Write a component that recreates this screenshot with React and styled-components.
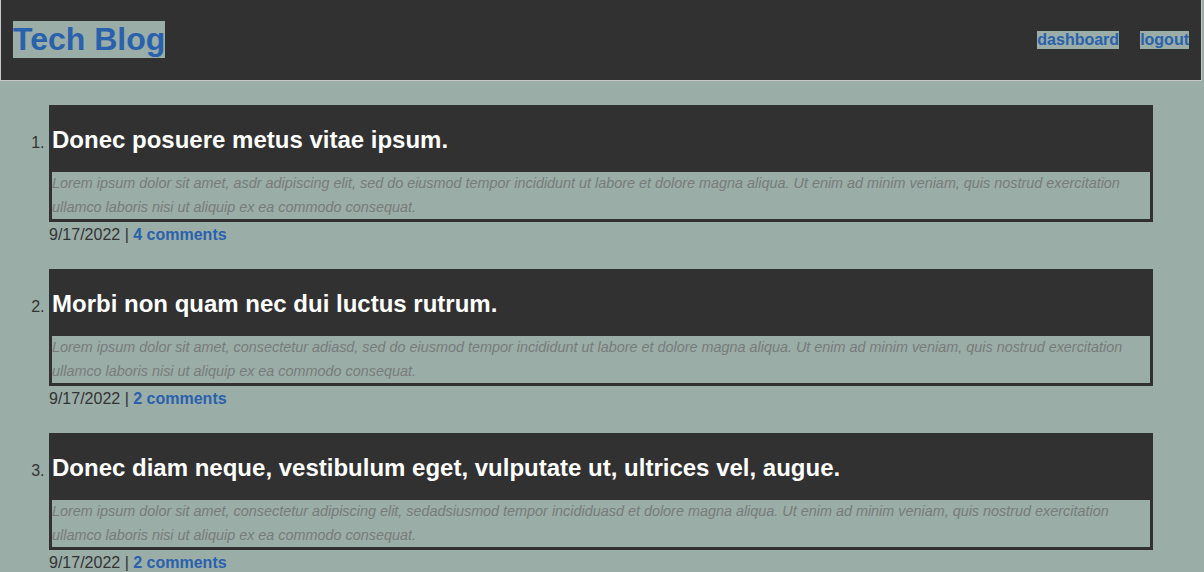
import React from "react";
import styled, { createGlobalStyle } from "styled-components";

const Global = createGlobalStyle`
  html, body {
    margin: 0;
    padding: 0;
    background: #9aada7;
    font-family: "Liberation Sans", Arial, sans-serif;
    color: #333;
  }
`;

const Header = styled.header`
  display: flex;
  align-items: center;
  justify-content: space-between;
  height: 80px;
  margin-right: 2px;
  padding: 0 12px;
  background: #313131;
  border: 1px solid #c3c8c6;
  border-top: none;
`;

const Logo = styled.h1`
  margin: -1px 0 0;
  font-size: 32px;
  font-weight: bold;
  line-height: 37px;
  color: #2961ad;
  background: #9aada7;
`;

const Nav = styled.nav`
  display: flex;
  gap: 21px;
  margin-top: -1px;
`;

const NavLink = styled.a`
  font-size: 16px;
  font-weight: bold;
  line-height: 18px;
  color: #2961ad;
  background: #9aada7;
  text-decoration: none;
`;

const List = styled.ol`
  margin: 24px 51px 0 49px;
  padding: 0;
`;

const Item = styled.li`
  font-size: 16px;
  color: #333;
  margin-bottom: 25px;
`;

const Card = styled.div`
  border: 3px solid #313131;
  border-top: none;
`;

const Title = styled.h2`
  margin: 0;
  padding: 21px 0 18px;
  background: #313131;
  color: #fff;
  font-size: 24px;
  line-height: 28px;
  font-weight: bold;
`;

const Body = styled.p`
  margin: 0;
  font-size: 14.4px;
  line-height: 23.5px;
  font-style: italic;
  color: #797b7a;
`;

const Meta = styled.div`
  padding-top: 3px;
  font-size: 16px;
  line-height: 19px;
  color: #333;
`;

const Comments = styled.a`
  font-weight: bold;
  color: #2961ad;
  text-decoration: none;
`;

const posts = [
  {
    title: "Donec posuere metus vitae ipsum.",
    body:
      "Lorem ipsum dolor sit amet, asdr adipiscing elit, sed do eiusmod tempor incididunt ut labore et dolore magna aliqua. Ut enim ad minim veniam, quis nostrud exercitation ullamco laboris nisi ut aliquip ex ea commodo consequat.",
    date: "9/17/2022",
    comments: "4 comments",
  },
  {
    title: "Morbi non quam nec dui luctus rutrum.",
    body:
      "Lorem ipsum dolor sit amet, consectetur adiasd, sed do eiusmod tempor incididunt ut labore et dolore magna aliqua. Ut enim ad minim veniam, quis nostrud exercitation ullamco laboris nisi ut aliquip ex ea commodo consequat.",
    date: "9/17/2022",
    comments: "2 comments",
  },
  {
    title: "Donec diam neque, vestibulum eget, vulputate ut, ultrices vel, augue.",
    body:
      "Lorem ipsum dolor sit amet, consectetur adipiscing elit, sedadsiusmod tempor incididuasd et dolore magna aliqua. Ut enim ad minim veniam, quis nostrud exercitation ullamco laboris nisi ut aliquip ex ea commodo consequat.",
    date: "9/17/2022",
    comments: "2 comments",
  },
];

export default function App() {
  return (
    <>
      <Global />
      <Header>
        <Logo>Tech Blog</Logo>
        <Nav>
          <NavLink href="#">dashboard</NavLink>
          <NavLink href="#">logout</NavLink>
        </Nav>
      </Header>
      <List>
        {posts.map((p, i) => (
          <Item key={i}>
            <Card>
              <Title>{p.title}</Title>
              <Body>{p.body}</Body>
            </Card>
            <Meta>
              {p.date} | <Comments href="#">{p.comments}</Comments>
            </Meta>
          </Item>
        ))}
      </List>
    </>
  );
}
